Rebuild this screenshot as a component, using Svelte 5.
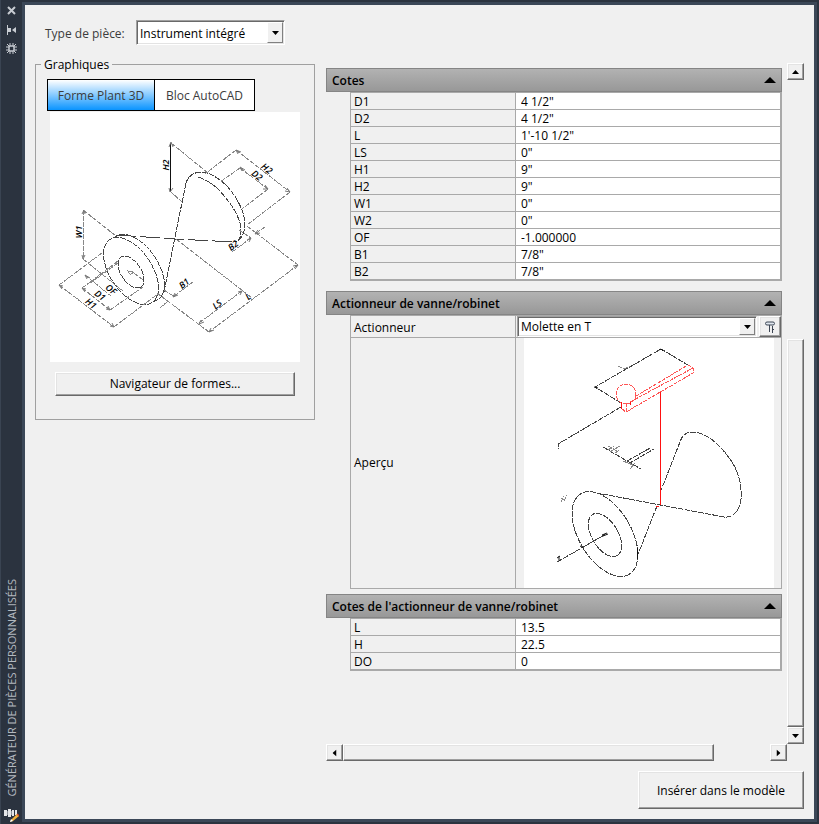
<script>
	let partType = $state('Instrument intégré');
	let actuator = $state('Molette en T');
	let tab = $state('shape');
	let open = $state({ dims: true, actuator: true, actuatorDims: true });

	let dims = $state([
		{ name: 'D1', value: '4 1/2"' },
		{ name: 'D2', value: '4 1/2"' },
		{ name: 'L', value: '1\'-10 1/2"' },
		{ name: 'LS', value: '0"' },
		{ name: 'H1', value: '9"' },
		{ name: 'H2', value: '9"' },
		{ name: 'W1', value: '0"' },
		{ name: 'W2', value: '0"' },
		{ name: 'OF', value: '-1.000000' },
		{ name: 'B1', value: '7/8"' },
		{ name: 'B2', value: '7/8"' }
	]);

	let actuatorDims = $state([
		{ name: 'L', value: '13.5' },
		{ name: 'H', value: '22.5' },
		{ name: 'DO', value: '0' }
	]);

	// Dimension labels of the shape drawing: text, x, y, angle.
	const labels = [
		['H2', 119, 53, -90],
		['W1', 32, 120, -90],
		['H2', 215, 59, 38],
		['D2', 205, 66, 38],
		['OF', 59, 180, 38],
		['D1', 48, 186, 38],
		['H1', 39, 194, 38],
		['B2', 185, 136, -38],
		['B1', 136, 174, -38],
		['LS', 169, 195, -38],
		['L', 200, 187, -38]
	];
</script>

{#snippet heading(key, title)}
	<button
		class="heading"
		aria-expanded={open[key]}
		onclick={() => (open[key] = !open[key])}
	>
		<span>{title}</span>
		<svg class:closed={!open[key]} width="12" height="6" viewBox="0 0 12 6"><path d="M6 0 12 6H0z" /></svg>
	</button>
{/snippet}

{#snippet properties(rows, prefix)}
	<table class="grid">
		<tbody>
			{#each rows as row (row.name)}
				<tr>
					<th scope="row"><label for="{prefix}-{row.name}">{row.name}</label></th>
					<td><input id="{prefix}-{row.name}" type="text" bind:value={row.value} /></td>
				</tr>
			{/each}
		</tbody>
	</table>
{/snippet}

{#snippet arrow(dir)}
	<svg class="arrow to-{dir}" width="7" height="4" viewBox="0 0 7 4"><path d="M0 0H7L3.5 4z" /></svg>
{/snippet}

<div class="palette">
	<aside class="strip">
		<div class="tools">
			<button aria-label="Fermer">
				<svg width="9" height="9" viewBox="0 0 9 9"><path d="M1 1 8 8M8 1 1 8" stroke="#c8ccd2" stroke-width="2" /></svg>
			</button>
			<button aria-label="Masquer automatiquement">
				<svg width="9" height="10" viewBox="0 0 9 10" fill="#c8ccd2"><path d="M0 0H1V10H0zM1 3H4V7H1zM9 2V8L5 5z" /></svg>
			</button>
			<button aria-label="Propriétés">
				<svg width="11" height="11" viewBox="0 0 11 11" fill="none" stroke="#c8ccd2">
					<path d="M4 0V3M7 0V3M4 8V11M7 8V11M0 4H3M0 7H3M8 4H11M8 7H11M1 1 3.500 3.500M10 1 7.500 3.500M1 10 3.500 7.500M10 10 7.500 7.500" />
					<rect x="3" y="3" width="5" height="5" rx="1" stroke-width="1.500" />
				</svg>
			</button>
		</div>
		<div class="caption">
			<span>GÉNÉRATEUR DE PIÈCES PERSONNALISÉES</span>
			<svg width="15" height="15" viewBox="0 0 15 15">
				<path d="M0 3H3V9H0zM4 2H7V10H4zM8 3H10V9H8zM11 3H13V8H11z" fill="#e4e6e8" />
				<path d="M3 4H4V8H3zM7 4H8V8H7z" fill="#8d939b" />
				<path d="M7 13 13 7 15 9 9 14 6 15z" fill="#f2b13a" />
				<path d="M13 7 15 9" stroke="#d9542c" stroke-width="1.500" />
				<path d="M6 15 7 12 9 14z" fill="#fff" />
			</svg>
		</div>
	</aside>

	<main>
		<section>
			<div class="type">
				<label for="part-type">Type de pièce:</label>
				<div class="combo">
					<select id="part-type" bind:value={partType}>
						<option>Instrument intégré</option>
					</select>
					<span class="drop">{@render arrow('down')}</span>
				</div>
			</div>

			<fieldset>
				<legend>Graphiques</legend>
				<div class="tabs">
					<button class:active={tab === 'shape'} onclick={() => (tab = 'shape')}>Forme Plant 3D</button>
					<button class:active={tab === 'block'} onclick={() => (tab = 'block')}>Bloc AutoCAD</button>
				</div>
				<svg class="shape" width="250" height="250" viewBox="0 0 250 250">
					<g class="lines">
						<!-- far disc -->
						<path d="M136 71C138 65 142 61 150 60C160 60 168 66 176 73C187 85 194 99 195 111C195 119 192 129 184 130" />
						<path d="M148 65C160 69 168 76 175 85C186 98 191 110 191 118C191 123 190 127 188 129" />
						<!-- body -->
						<path d="M136 71 125 125 114 180" />
						<path d="M66 123 125 127 184 130" stroke-dasharray="20 4" />
						<!-- near disc -->
						<ellipse cx="87" cy="156" rx="38" ry="21" transform="rotate(56 87 156)" />
						<ellipse class="face" cx="81" cy="159" rx="38" ry="21" transform="rotate(56 81 159)" />
						<ellipse cx="81" cy="160" rx="18" ry="10" transform="rotate(56 81 160)" />
					</g>
					<g class="lines thin">
						<path d="M78 159 84 160 80 163zM84 161 93 168" />
						<path d="M121 31 158 61M120 79 132 90M33 98 66 124M33 147 73 179M33 98V147" />
						<path d="M186 38 240 80M186 38 155 62M240 80 197 113M190 56 218 77M190 56 170 70M218 77 192 97" />
						<path d="M197 114 248 153M248 153 159 220M126 127 202 186M192 179 149 211M107 181 159 220" />
						<path d="M215 115 205 122M189 118 201 126M201 126 182 140M143 170 123 185M114 178 125 185M118 189 110 196" />
						<path d="M68 149 43 168M68 151 40 171M35 163 61 184M32 176 60 198M32 176 43 168M60 198 93 175M9 173 64 215M9 173 52 141M64 215 108 182" />
					</g>
					<path class="solid" d="M120.500 31V80" />
					<path
						class="tips"
						d="M119 35 121 30 123 35M119 76 120 80 123 76M32 102 34 98 35 102M32 143 33 147 35 143M188 42 186 38 191 40M235 79 240 80 237 76M192 59 190 55 195 58M213 77 218 77 215 73M13 174 9 173 12 177M60 214 64 215 62 211M36 177 32 176 35 180M56 197 60 198 58 194M243 154 248 153 245 157M161 216 159 220 164 218M188 180 192 179 190 183M151 208 149 212 154 210M208 118 205 122 210 121M197 128 201 126 199 130M125 181 123 185 128 183M37 167 35 163 40 166"
					/>
					{#each labels as [text, x, y, angle]}
						<text {x} {y} transform="rotate({angle} {x} {y})">{text}</text>
					{/each}
				</svg>
				<button class="browse raised">Navigateur de formes...</button>
			</fieldset>
		</section>

		<section class="scroller">
			<div class="pane">
				<div class="content">
					{@render heading('dims', 'Cotes')}
					{#if open.dims}{@render properties(dims, 'dim')}{/if}
				</div>
				<div class="content second">
					{@render heading('actuator', 'Actionneur de vanne/robinet')}
					{#if open.actuator}
						<table class="grid actuator">
							<tbody>
								<tr>
									<th scope="row"><label for="actuator">Actionneur</label></th>
									<td>
										<div class="pick">
											<div class="combo">
												<select id="actuator" bind:value={actuator}>
													<option>Molette en T</option>
												</select>
												<span class="drop">{@render arrow('down')}</span>
											</div>
											<button class="raised" aria-label="Choisir l'actionneur">
												<svg width="12" height="12" viewBox="0 0 12 12" fill="none" stroke="#3d4654">
													<rect x="1.500" y="1" width="9" height="3" rx="1.500" fill="#dfe6ee" />
													<path d="M5.500 4V11M8.500 5V12M8 8.500H10" />
												</svg>
											</button>
										</div>
									</td>
								</tr>
								<tr>
									<th scope="row">Aperçu</th>
									<td class="preview">
										<svg width="250" height="250" viewBox="0 0 250 250">
											<g class="lines">
												<path d="M97 65 71 49 137 11 164 27M97 69 34 106V111" />
												<path d="M79 109 103 123 117 131M103 123 128 109M104 126 130 111" />
												<path d="M136 155 156 104C158 97 163 94 168 94C182 94 196 106 208 124C215 135 218 148 217 161C215 174 209 180 200 179L73 155" />
												<path d="M133 168 113 219" />
												<ellipse cx="81" cy="196" rx="47" ry="26" transform="rotate(59 81 196)" />
												<ellipse cx="81" cy="197" rx="24" ry="13" transform="rotate(59 81 197)" />
												<path d="M33 224 82 196" />
											</g>
											<path class="solid" d="M113.500 210V221M78 197 83 195M79 198 84 196M56 208 60 210M35 218V223M33 220 36 218M135 12 137 11 139 13M70 49 74 50" />
											<path class="lines thin" d="M94 28 100 31 106 28M84 108 93 113M86 114 96 108M91 115 96 112M84 112 90 108M37 160 41 162M37 164 40 158M40 163 43 157M99 123 109 127M106 131 111 125" />
											<g class="red">
												<g class="dotted">
													<circle cx="102" cy="56" r="10" />
													<path d="M112 58 164 27M106 64 169 30M102 74 169 35M164 27 169 30V35M98 71 102 74V65" />
												</g>
												<path d="M136.500 54V167M132 168H135M97.500 64V71M106.500 64V67" />
											</g>
										</svg>
									</td>
								</tr>
							</tbody>
						</table>
					{/if}
				</div>
				<div class="content">
					{@render heading('actuatorDims', "Cotes de l'actionneur de vanne/robinet")}
					{#if open.actuatorDims}{@render properties(actuatorDims, 'act')}{/if}
				</div>
			</div>
			<div class="vbar">
				<button class="raised" aria-label="Défiler vers le haut">{@render arrow('up')}</button>
				<div></div>
				<div class="raised"></div>
				<button class="raised" aria-label="Défiler vers le bas">{@render arrow('down')}</button>
			</div>
			<div class="hbar">
				<button class="raised" aria-label="Défiler vers la gauche">{@render arrow('left')}</button>
				<div class="raised"></div>
				<div></div>
				<button class="raised" aria-label="Défiler vers la droite">{@render arrow('right')}</button>
			</div>
			<button class="insert raised">Insérer dans le modèle</button>
		</section>
	</main>
</div>

<style>
	:global(body) {
		margin: 0;
		background: #2b333f;
	}

	.palette {
		display: grid;
		grid-template-columns: 22px 1fr;
		min-height: 100vh;
		background: #2b333f;
		font-family: 'Open Sans', 'Noto Sans', sans-serif;
		font-size: 12px;
		line-height: 16px;
		color: #000;
	}

	button,
	input,
	select {
		box-sizing: border-box;
		margin: 0;
		padding: 0;
		border: 0;
		border-radius: 0;
		font: inherit;
		color: inherit;
	}

	svg {
		display: block;
	}

	.raised {
		display: flex;
		align-items: center;
		justify-content: center;
		box-sizing: border-box;
		border: 1px solid;
		border-color: #fff #696969 #696969 #fff;
		background: #f0f0f0;
		box-shadow: inset -1px -1px #a0a0a0, inset 1px 1px #e3e3e3;
	}

	.to-up {
		transform: rotate(180deg);
	}

	.to-left {
		transform: rotate(90deg);
	}

	.to-right {
		transform: rotate(-90deg);
	}

	/* Title strip */
	.strip {
		display: flex;
		flex-direction: column;
		justify-content: space-between;
		border-left: 1px solid #3a4452;
	}

	.tools {
		display: flex;
		flex-direction: column;
		padding-top: 1px;
	}

	.tools button {
		display: flex;
		align-items: center;
		justify-content: center;
		height: 19px;
		background: none;
	}

	.caption {
		display: flex;
		flex-direction: column;
		align-items: center;
		gap: 11px;
		padding-bottom: 2px;
		font-size: 11px;
		color: #b4b9c0;
	}

	.caption span {
		writing-mode: vertical-rl;
		transform: rotate(180deg);
		white-space: nowrap;
	}

	/* Window body */
	main {
		display: grid;
		grid-template-columns: 280px minmax(0, 1fr);
		gap: 11px;
		box-sizing: border-box;
		margin: 2px 2px 2px 0;
		padding: 0 10px 10px;
		border: 3px solid #3b4757;
		background: #f0f0f0;
	}

	.type {
		display: flex;
		align-items: center;
		padding: 15px 0 0 10px;
		color: #3c3c3c;
	}

	.type label {
		width: 91px;
		padding-top: 2px;
		white-space: nowrap;
	}

	.type .combo {
		width: 149px;
		height: 25px;
	}

	.combo {
		position: relative;
		color: #000;
	}

	select {
		width: 100%;
		height: 100%;
		padding: 2px 0 0 3px;
		border: 1px solid;
		border-color: #a0a0a0 #fff #fff #a0a0a0;
		appearance: none;
		background: #fff;
		box-shadow: inset 1px 1px #696969, inset -1px -1px #e3e3e3;
	}

	.drop {
		position: absolute;
		top: 2px;
		right: 2px;
		bottom: 2px;
		display: flex;
		align-items: center;
		justify-content: center;
		width: 16px;
		box-sizing: border-box;
		border: 1px solid;
		border-color: #fff #808080 #808080 #fff;
		background: #f0f0f0;
		pointer-events: none;
	}

	fieldset {
		min-width: 0;
		margin: 11px 0 0;
		padding: 7px 11px 23px;
		border: 1px solid #a0a0a0;
	}

	legend {
		margin-left: -6px;
		padding: 1px 3px 0;
		line-height: 15px;
	}

	.tabs {
		display: grid;
		grid-template-columns: 106px 100px;
		width: 206px;
		border: 1px solid #000;
	}

	.tabs button {
		height: 30px;
		padding-top: 2px;
		background: #fff;
		color: #3c3c3c;
	}

	.tabs button + button {
		border-left: 1px solid #000;
	}

	.tabs .active {
		background: linear-gradient(#fff, #0a94ff);
	}

	.shape {
		margin: 1px 3px 0;
		background: #fff;
	}

	.browse {
		width: 240px;
		height: 24px;
		margin: 10px 8px 0;
	}

	.lines {
		fill: none;
		stroke: #444;
		stroke-dasharray: 6 1;
		shape-rendering: crispEdges;
	}

	.thin {
		stroke: #888;
		stroke-dasharray: 5 1;
	}

	.face {
		fill: #fff;
	}

	.solid {
		fill: none;
		stroke: #111;
	}

	.tips {
		fill: none;
		stroke: #777;
	}

	.shape text {
		font-size: 9px;
		font-style: italic;
		font-weight: 600;
		text-anchor: middle;
	}

	.red {
		fill: none;
		stroke: #f11;
		shape-rendering: crispEdges;
	}

	.dotted {
		stroke: #f55;
		stroke-dasharray: 4 1;
	}

	/* Property pane with its scroll bars */
	.scroller {
		display: grid;
		grid-template-columns: minmax(0, 1fr) 17px;
		grid-template-rows: 1fr 17px 48px;
		padding-top: 58px;
	}

	.pane {
		padding: 5px 5px 0 0;
	}

	.content {
		margin-bottom: 10px;
	}

	.content.second {
		margin-bottom: 5px;
	}

	.heading {
		display: flex;
		align-items: center;
		justify-content: space-between;
		width: 100%;
		height: 24px;
		padding: 0 5px;
		border: 1px solid #858585;
		background: linear-gradient(#b2b2b2, #989898);
		font-weight: 600;
	}

	.heading span {
		padding-top: 2px;
	}

	.closed {
		transform: rotate(180deg);
	}

	.grid {
		width: calc(100% - 24px);
		margin-left: 24px;
		border: 1px solid #a9a9a9;
		border-right-width: 2px;
		border-spacing: 0;
		table-layout: fixed;
	}

	th,
	td {
		height: 16px;
		padding: 0;
		border-bottom: 1px solid #a9a9a9;
	}

	th {
		width: 161px;
		padding-left: 3px;
		border-right: 1px solid #a9a9a9;
		font-weight: 400;
		text-align: left;
	}

	th label {
		display: block;
		height: 15px;
		padding-top: 1px;
	}

	td {
		background: #fff;
	}

	td input {
		display: block;
		width: 100%;
		height: 16px;
		padding: 1px 0 0 5px;
		background: none;
	}

	.actuator {
		border-bottom: 0;
		border-right-width: 1px;
	}

	.pick {
		display: grid;
		grid-template-columns: 1fr 22px;
		gap: 2px;
		height: 21px;
		background: #f0f0f0;
	}

	.pick .combo {
		margin-left: 1px;
	}

	.pick select {
		padding-top: 0;
	}

	.preview {
		padding-left: 8px;
		background: #f0f0f0;
	}

	.preview svg {
		background: #fff;
	}

	.vbar {
		display: grid;
		grid-template-rows: 17px 259fr 388fr 17px;
	}

	.hbar {
		display: grid;
		grid-template-columns: 17px 371fr 56fr 17px;
	}

	.insert {
		grid-column: 1 / -1;
		justify-self: end;
		width: 166px;
		height: 38px;
		margin-top: 10px;
		padding-top: 1px;
	}
</style>
